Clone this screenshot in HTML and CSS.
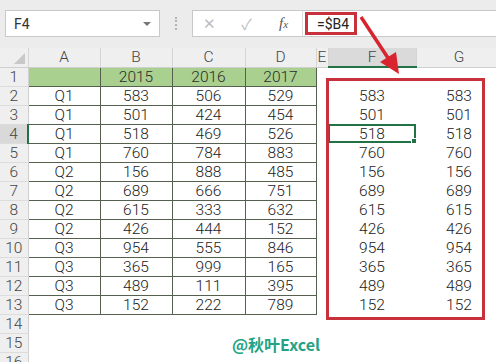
FILE: index.html
```html
<!DOCTYPE html>
<html lang="zh">
<head>
  <meta charset="UTF-8">
  <title>Excel</title>
  <link rel="stylesheet" href="styles.css">
</head>
<body>
  <div class="page">
    <div class="topbar">
      <div class="namebox">
        <span>F4</span>
        <span class="drop"></span>
      </div>
      <div class="dots"></div>
      <div class="fbar">
        <span class="ico x">&#x2715;</span>
        <span class="ico ok">&#x2713;</span>
        <span class="ico fx">f<small>x</small></span>
        <div class="formula"><span class="hl">=$B4</span></div>
      </div>
    </div>

    <div class="sheet">
      <table class="grid">
        <colgroup>
          <col class="c-rh"><col class="c-a"><col class="c-b"><col class="c-c"><col class="c-d"><col class="c-e"><col class="c-f"><col class="c-g">
        </colgroup>
        <thead>
          <tr><th class="corner"><span class="tri"></span></th><th>A</th><th>B</th><th>C</th><th>D</th><th class="hn">E</th><th class="sel-col">F</th><th>G</th></tr>
        </thead>
        <tbody id="rows"></tbody>
      </table>
      <div class="redbox"></div>
    </div>

    <svg class="arrow" width="496" height="90" viewBox="0 0 496 90">
      <line x1="361" y1="17" x2="390" y2="61" stroke="#d8242f" stroke-width="3.5"/>
      <polygon points="399,74 380,62 396,52" fill="#d8242f"/>
    </svg>

    <div class="mark">@秋叶Excel</div>
  </div>

  <script>
    var data = [
      ['', '2015', '2016', '2017', '', ''],
      ['Q1', 583, 506, 529, 583, 583],
      ['Q1', 501, 424, 454, 501, 501],
      ['Q1', 518, 469, 526, 518, 518],
      ['Q1', 760, 784, 883, 760, 760],
      ['Q2', 156, 888, 485, 156, 156],
      ['Q2', 689, 666, 751, 689, 689],
      ['Q2', 615, 333, 632, 615, 615],
      ['Q2', 426, 444, 152, 426, 426],
      ['Q3', 954, 555, 846, 954, 954],
      ['Q3', 365, 999, 165, 365, 365],
      ['Q3', 489, 111, 395, 489, 489],
      ['Q3', 152, 222, 789, 152, 152]
    ];
    var tbody = document.getElementById('rows');
    for (var i = 1; i <= 16; i++) {
      var r = data[i - 1];
      var tr = document.createElement('tr');
      var html = '<th class="rh' + (i === 4 ? ' sel-row' : '') + '">' + i + '</th>';
      if (r) {
        for (var j = 0; j < 4; j++) {
          html += '<td class="b' + (i === 1 ? ' head' : '') + '">' + r[j] + '</td>';
        }
        html += '<td></td>';
        html += '<td' + (i === 4 ? ' class="sel"' : '') + '>' + r[4] + (i === 4 ? '<span class="handle"></span>' : '') + '</td>';
        html += '<td>' + r[5] + '</td>';
      } else {
        html += '<td></td><td></td><td></td><td></td><td></td><td></td><td></td>';
      }
      tr.innerHTML = html;
      tbody.appendChild(tr);
    }
  </script>
</body>
</html>
```

FILE: styles.css
```css
body { margin: 0; background: #fff; font-family: Roboto, "Noto Sans CJK SC", sans-serif; color: #222; }
.page { position: relative; width: 496px; height: 362px; overflow: hidden; }

.topbar { height: 48px; background: #ececec; display: flex; align-items: flex-start; padding-top: 10px; box-sizing: border-box; }
.namebox {
  margin-left: 5px; width: 155px; height: 27px; box-sizing: border-box;
  background: #fff; border: 1px solid #c9c9c9;
  display: flex; align-items: center; justify-content: space-between;
  padding: 0 8px 0 8px; font-size: 14px; color: #333;
}
.drop { width: 0; height: 0; border-left: 4px solid transparent; border-right: 4px solid transparent; border-top: 4px solid #777; }
.dots { width: 0; height: 13px; margin: 7px 15px 0 15px; border-left: 2px dotted #b5b5b5; }
.fbar {
  flex: 1; height: 27px; box-sizing: border-box; background: #fff;
  border: 1px solid #c9c9c9; border-right: none;
  display: flex; align-items: center;
}
.ico { color: #bdbdbd; font-size: 15px; width: 37px; text-align: center; }
.ico.x { margin-left: -2px; }
.fx { font-family: "Liberation Serif", serif; font-style: italic; color: #555; font-size: 15px; }
.fx small { font-size: 11px; }
.formula { flex: 1; height: 100%; display: flex; align-items: center; padding-left: 2px; border-left: 1px solid #ddd; }
.hl {
  border: 3px solid #c8303c; height: 23px; box-sizing: border-box; width: 52px;
  display: flex; align-items: center; padding-left: 9px; font-size: 14px; color: #222;
}

.sheet { position: relative; }
.grid { border-collapse: collapse; table-layout: fixed; width: 502px; }
.c-rh { width: 28px; }
.c-a { width: 72px; }
.c-b { width: 72px; }
.c-c { width: 73px; }
.c-d { width: 71px; }
.c-e { width: 12px; }
.c-f { width: 88px; }
.c-g { width: 86px; }

.grid th, .grid td { height: 19px; padding: 0; font-weight: 300; text-align: center; font-size: 15.5px; line-height: 18px; box-sizing: border-box; overflow: hidden; white-space: nowrap; }
thead th { background: #efefef; color: #444; border-right: 1px solid #d5d5d5; border-bottom: 1px solid #cfcfcf; }
thead th.hn { text-align: left; padding-left: 1px; }
.corner { position: relative; }
.tri { position: absolute; right: 3px; bottom: 3px; width: 0; height: 0; border-left: 11px solid transparent; border-bottom: 11px solid #c8c8c8; }
.sel-col { background: #dadada; border-bottom: 2px solid #217346 !important; }
.rh { background: #efefef; color: #444; border-right: 1px solid #cfcfcf; border-bottom: 1px solid #dcdcdc; }
.rh.sel-row { background: #d9d9d9; border-right: 2px solid #217346; }

td.b { border: 1px solid #55604f; }
td.head { background: #a9d08e; color: #2b2b2b; }
td.sel { position: relative; box-shadow: inset 0 0 0 2px #217346; }
.handle { position: absolute; right: -2px; bottom: -2px; width: 5px; height: 5px; background: #217346; border: 1px solid #fff; }

.redbox { position: absolute; left: 326px; top: 30px; width: 159px; height: 242px; box-sizing: border-box; border: 3px solid #c8303c; }
.arrow { position: absolute; left: 0; top: 0; }
.mark { position: absolute; left: 232px; top: 332px; font-family: "Noto Sans CJK SC", sans-serif; font-weight: bold; font-size: 16px; color: #24a384; }
```
